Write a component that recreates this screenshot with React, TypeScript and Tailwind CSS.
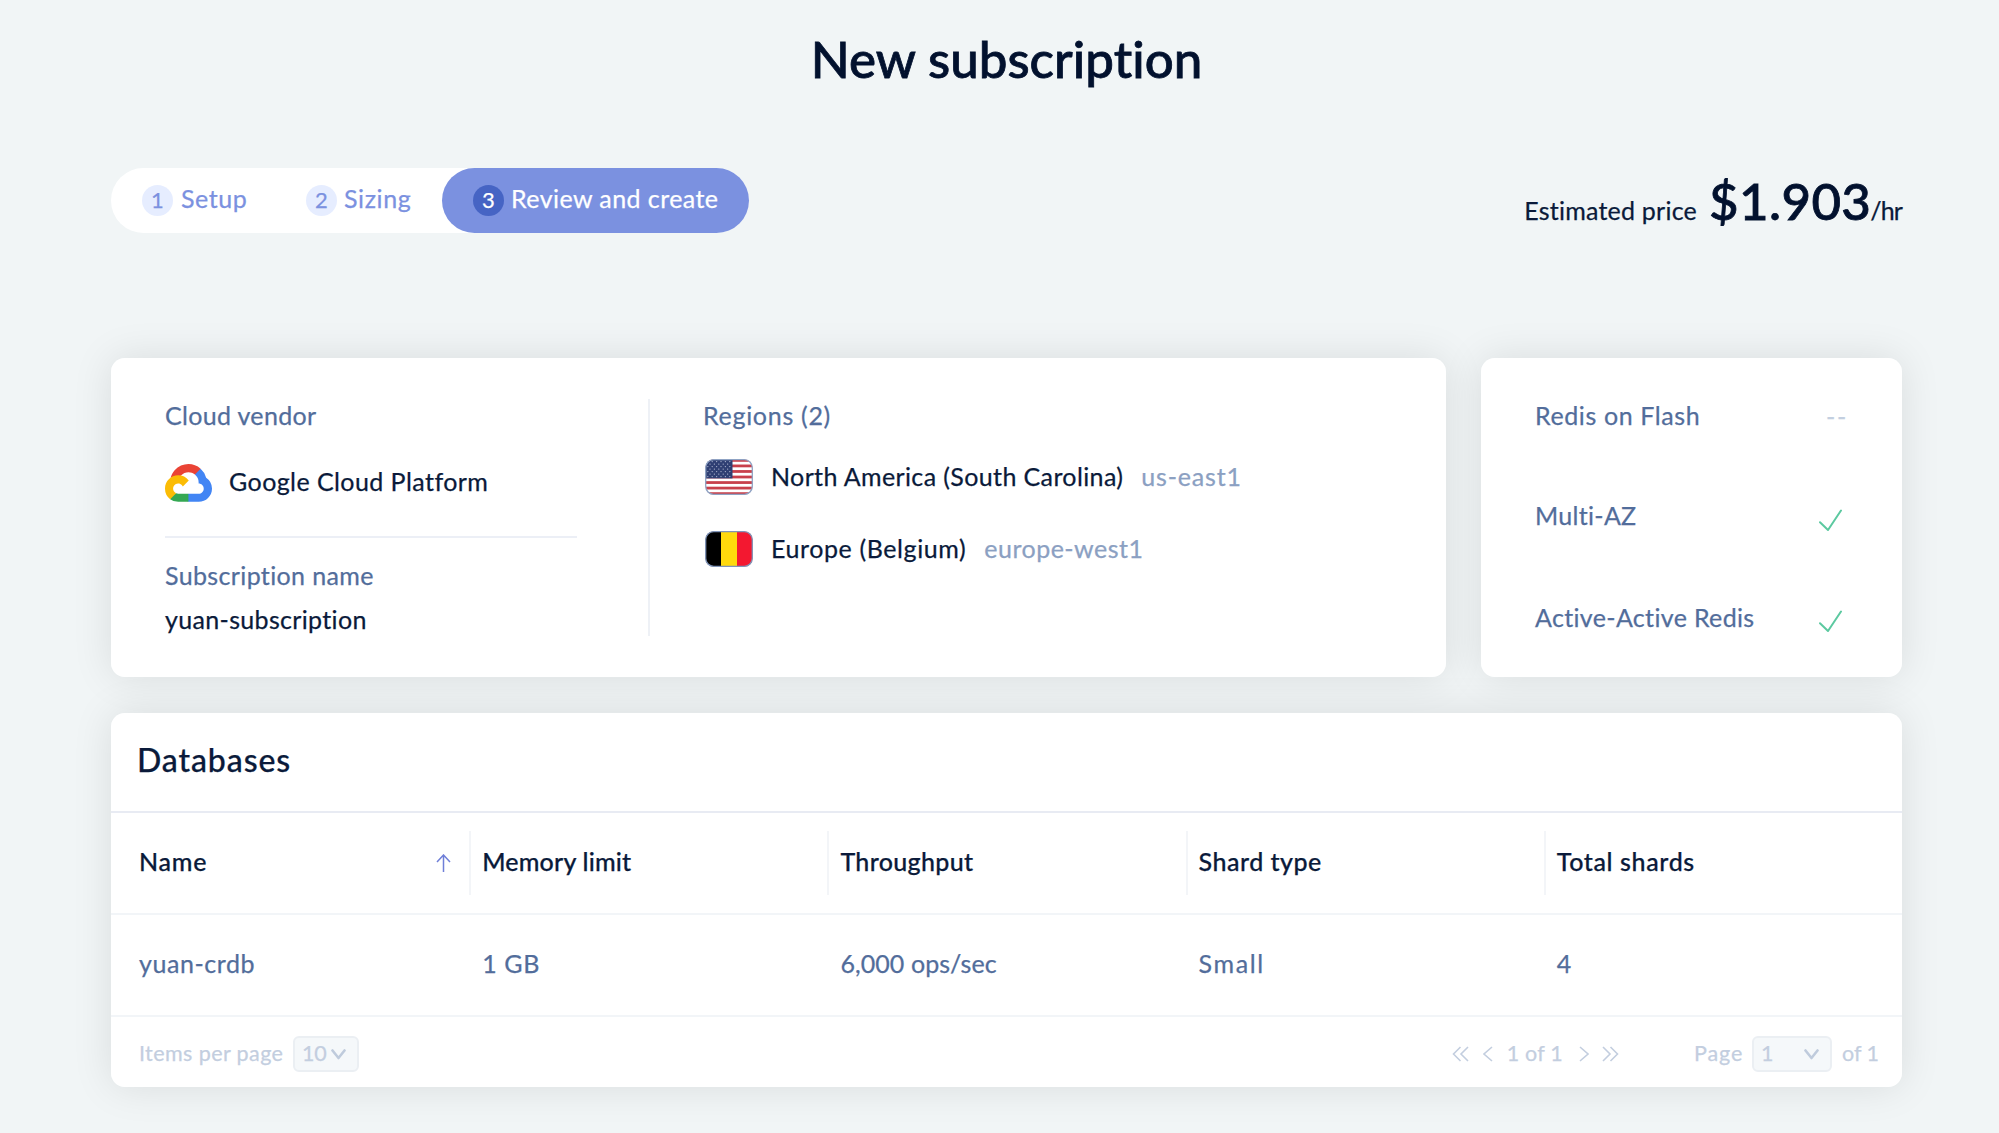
import React from "react";

const card =
  "relative rounded-[14px] bg-white before:absolute before:inset-0 before:-z-10 before:rounded-[14px] before:shadow-[0_0_40px_rgba(0,0,0,0.1)] before:content-['']";

function GoogleCloudLogo() {
  return (
    <svg className="h-[38px] w-[47px] shrink-0" viewBox="0 0 256 206">
      <path fill="#EA4335" d="M170.252 56.819l22.253-22.253 1.483-9.37C153.437-11.677 88.976-7.496 52.42 33.92 42.267 45.423 34.734 59.764 30.717 74.573l7.97-1.123 44.505-7.34 3.436-3.513c19.797-21.742 53.27-24.667 76.128-6.168l7.496.39z" />
      <path fill="#4285F4" d="M224.205 73.918a100.249 100.249 0 0 0-30.217-48.722l-31.232 31.232a55.515 55.515 0 0 1 20.379 44.037v5.544c15.351 0 27.797 12.445 27.797 27.796 0 15.352-12.446 27.485-27.797 27.485h-55.671l-5.466 5.934v33.34l5.466 5.231h55.67c39.93.311 72.553-31.494 72.864-71.424a72.303 72.303 0 0 0-31.793-60.453z" />
      <path fill="#34A853" d="M71.87 205.796h55.593V161.29H71.87a27.275 27.275 0 0 1-11.477-2.498l-7.887 2.42-22.409 22.253-1.952 7.574a71.922 71.922 0 0 0 43.724 14.757z" />
      <path fill="#FBBC05" d="M71.87 61.426C31.94 61.664-.237 94.227.001 134.156a72.301 72.301 0 0 0 28.143 56.882l32.248-32.248c-13.99-6.322-20.208-22.786-13.887-36.776 6.32-13.99 22.786-20.208 36.775-13.888a27.796 27.796 0 0 1 13.887 13.888l32.248-32.248A72.224 72.224 0 0 0 71.87 61.426z" />
    </svg>
  );
}

function UsFlag() {
  const stars: [number, number][] = [];
  for (let r = 0; r < 7; r++)
    for (let c = 0; c < (r % 2 ? 5 : 6); c++) stars.push([2.8 + c * 4.4 + (r % 2 ? 2.2 : 0), 2.6 + r * 2.5]);
  return (
    <svg className="h-9 w-12 shrink-0" viewBox="0 0 48 36">
      <clipPath id="us"><rect x="0.5" y="0.5" width="47" height="35" rx="8" /></clipPath>
      <g clipPath="url(#us)">
        <rect width="48" height="36" fill="#fff" />
        {[0, 1, 2, 3, 4, 5, 6].map((i) => (
          <rect key={i} y={i * 5.54} width="48" height="2.77" fill="#c8404b" />
        ))}
        <rect width="27.5" height="19.4" fill="#2f3f73" />
        {stars.map(([x, y], i) => (
          <circle key={i} cx={x} cy={y} r="0.7" fill="#a9b1cc" />
        ))}
      </g>
      <rect x="0.7" y="0.7" width="46.6" height="34.6" rx="8" fill="none" stroke="#8fa3c4" strokeWidth="1.3" />
    </svg>
  );
}

function BelgiumFlag() {
  return (
    <svg className="h-9 w-12 shrink-0" viewBox="0 0 48 36">
      <clipPath id="be"><rect x="0.5" y="0.5" width="47" height="35" rx="8" /></clipPath>
      <g clipPath="url(#be)">
        <rect width="16" height="36" fill="#000" />
        <rect x="16" width="16" height="36" fill="#ffd90c" />
        <rect x="32" width="16" height="36" fill="#f31830" />
      </g>
      <rect x="0.7" y="0.7" width="46.6" height="34.6" rx="8" fill="none" stroke="#8094b8" strokeWidth="1.3" />
    </svg>
  );
}

function Check() {
  return (
    <svg className="mr-1 mt-[9px] h-[23px] w-[23px]" viewBox="0 0 23 23" fill="none" stroke="#5cc9a0" strokeWidth="2" strokeLinecap="round" strokeLinejoin="round">
      <path d="M1 13.2 9 21 22 1.5" />
    </svg>
  );
}

function Chevrons({ count, right }: { count: number; right?: boolean }) {
  return (
    <svg className={count === 2 ? "h-4 w-[17px]" : "h-4 w-[10px]"} viewBox={count === 2 ? "0 0 17 16" : "0 0 10 16"} fill="none" stroke="#c3cedf" strokeWidth="1.6">
      {count === 2 ? (
        <path d={right ? "M1 1 8 8 1 15M8.5 1 15.5 8 8.5 15" : "M16 1 9 8 16 15M8.5 1 1.5 8 8.5 15"} />
      ) : (
        <path d={right ? "M1 1 9 8 1 15" : "M9 1 1 8 9 15"} />
      )}
    </svg>
  );
}

function Caret() {
  return (
    <svg className="h-[11px] w-[15px]" viewBox="0 0 15 11" fill="none" stroke="#bfcbdc" strokeWidth="2.6" strokeLinecap="round" strokeLinejoin="round">
      <path d="M1.5 1.5 7.5 9 13.5 1.5" />
    </svg>
  );
}

const columns = [
  { title: "Name", titleCls: "tracking-[0.8px]", value: "yuan-crdb", valueCls: "tracking-[0.56px]" },
  { title: "Memory limit", titleCls: "tracking-[0.2px]", value: "1 GB", valueCls: "tracking-[0.6px]" },
  { title: "Throughput", titleCls: "tracking-[0.34px]", value: "6,000 ops/sec", valueCls: "tracking-[0.07px]" },
  { title: "Shard type", titleCls: "tracking-[0.5px]", value: "Small", valueCls: "tracking-[1.6px]" },
  { title: "Total shards", titleCls: "tracking-[0.62px]", value: "4", valueCls: "" },
];

export default function App() {
  return (
    <div className="isolate h-[1133px] w-[1999px] overflow-hidden whitespace-nowrap bg-[#f1f5f6] pl-[111px] pr-[97px] pt-7 font-['Lato',sans-serif] text-[25px] leading-[30px] text-[#0a1a3a] [-webkit-text-stroke:0.25px_currentColor]">
      <h1 className="h-[60px] pt-px text-center text-[51px] font-medium leading-[60px] tracking-[0.05px] text-[#02112e] [-webkit-text-stroke:0.8px_currentColor]">New subscription</h1>

      <div className="mt-20 flex h-[65px] items-start justify-between">
        <ol className="flex h-[65px] w-[638px] items-center rounded-full bg-white text-[#7b91e0]">
          <li className="flex w-[195px] items-center gap-2 pl-[31px]">
            <span className="flex size-[31px] items-center justify-center rounded-full bg-[#e6edff] pb-0.5 text-[22px]">1</span>
            <span className="pb-[5px] tracking-[0.55px]">Setup</span>
          </li>
          <li className="flex w-[136px] items-center gap-[7px]">
            <span className="flex size-[31px] items-center justify-center rounded-full bg-[#e6edff] pb-0.5 text-[22px]">2</span>
            <span className="pb-[5px] tracking-[0.6px]">Sizing</span>
          </li>
          <li className="flex h-full flex-1 items-center gap-[7px] rounded-full bg-[#7b91e0] pl-[31px] text-white">
            <span className="flex size-[31px] items-center justify-center rounded-full bg-[#4664c4] pb-0.5 text-[22px]">3</span>
            <span className="pb-[5px] tracking-[0.43px]">Review and create</span>
          </li>
        </ol>
        <div className="mt-[3px] flex items-baseline leading-[60px]">
          <span className="tracking-[0.22px]">Estimated price</span>
          <span className="ml-3 text-[51px] font-medium tracking-[0.4px] text-[#02112e] [-webkit-text-stroke:0.8px_currentColor]">$1.903</span>
          <span className="-ml-px tracking-[-0.9px]">/hr</span>
        </div>
      </div>

      <div className="mt-[125px] flex h-[319px] gap-[35px]">
        <section className={`${card} flex w-[1335px] pl-[54px]`}>
          <div className="w-[412px] pt-[42px]">
            <h2 className="tracking-[0.33px] text-[#526d9b]">Cloud vendor</h2>
            <div className="mt-[34px] flex items-center gap-[17px]">
              <GoogleCloudLogo />
              <span className="pb-1 tracking-[0.43px]">Google Cloud Platform</span>
            </div>
            <div className="mt-[34px] h-0.5 bg-[#eceff6]" />
            <h2 className="mt-[22px] tracking-[0.36px] text-[#526d9b]">Subscription name</h2>
            <p className="mt-[14px] tracking-[0.33px]">yuan-subscription</p>
          </div>
          <div className="ml-[71px] mt-[41px] h-[237px] w-0.5 bg-[#eef1f6]" />
          <div className="ml-[53px] pt-[42px]">
            <h2 className="tracking-[0.7px] text-[#526d9b]">Regions (2)</h2>
            <div className="mt-[29px] flex items-center">
              <span className="ml-0.5"><UsFlag /></span>
              <span className="ml-[18px] pb-0.5 tracking-[0.38px]">North America (South Carolina)</span>
              <span className="ml-[18px] pb-0.5 tracking-[0.8px] text-[#8ba0c2]">us-east1</span>
            </div>
            <div className="mt-9 flex items-center">
              <span className="ml-0.5"><BelgiumFlag /></span>
              <span className="ml-[18px] pb-[3px] tracking-[0.6px]">Europe (Belgium)</span>
              <span className="ml-[18px] pb-[3px] tracking-[0.48px] text-[#8ba0c2]">europe-west1</span>
            </div>
          </div>
        </section>

        <section className={`${card} flex-1 pl-[54px] pr-[56px] pt-[42px] text-[#526d9b]`}>
          <div className="flex h-[100px] items-start justify-between">
            <span className="tracking-[0.6px]">Redis on Flash</span>
            <span className="-mr-0.5 pt-px tracking-[1.7px] text-[#c3cfe0]">--</span>
          </div>
          <div className="flex h-[101px] items-start justify-between">
            <span className="tracking-[0.3px]">Multi-AZ</span>
            <Check />
          </div>
          <div className="flex items-start justify-between">
            <span className="pt-px tracking-[0.34px]">Active-Active Redis</span>
            <Check />
          </div>
        </section>
      </div>

      <section className={`${card} mt-9 h-[374px]`}>
        <h2 className="h-[98px] pl-[26px] pt-7 text-[32px] font-medium leading-[38px] tracking-[0.9px]">Databases</h2>
        <div className="grid h-[104px] grid-cols-5 border-b-2 border-t-2 border-[#f2f5f8] border-t-[#e8ebf3]">
          {columns.map((c, i) => (
            <div key={c.title} className={i === 0 ? "mt-[18px] flex h-16 items-center justify-between pl-[28px] pr-[18px]" : "mt-[18px] flex h-16 items-center border-l-2 border-[#f3f5f8] pl-[11px]"}>
              <span className={`pb-1 font-medium ${c.titleCls}`}>{c.title}</span>
              {i === 0 && (
                <svg className="h-[18px] w-[15px]" viewBox="0 0 15 18" fill="none" stroke="#6f7fd8" strokeWidth="1.5">
                  <path d="M7.5 18V1M1 8 7.5 1 14 8" />
                </svg>
              )}
            </div>
          ))}
        </div>
        <div className="grid h-[102px] grid-cols-5 items-center border-b-2 border-[#f2f5f8] text-[#526d9b]">
          {columns.map((c, i) => (
            <span key={c.title} className={`pb-[5px] ${i === 0 ? "pl-[28px]" : "pl-[13px]"} ${c.valueCls}`}>{c.value}</span>
          ))}
        </div>
        <div className="flex h-[70px] items-center justify-between pl-[28px] pr-[23px] text-[21.5px] text-[#c3cedf]">
          <div className="flex items-center pt-1">
            <span className="w-[154px] pb-[3px] tracking-[0.41px]">Items per page</span>
            <span className="flex h-9 w-[66px] items-center gap-[5px] rounded-md border-2 border-[#ebeff3] bg-[#f5f8fa] pl-[7px]">
              <span className="pb-[3px] tracking-[-0.3px]">10</span>
              <Caret />
            </span>
          </div>
          <div className="flex items-center pt-1">
            <Chevrons count={2} />
            <span className="ml-[14px]"><Chevrons count={1} /></span>
            <span className="ml-[14px] pb-[3px] tracking-[0.2px]">1 of 1</span>
            <span className="ml-4"><Chevrons count={1} right /></span>
            <span className="ml-[13px]"><Chevrons count={2} right /></span>
            <span className="ml-[75px] w-[58px] pb-[3px] tracking-[0.9px]">Page</span>
            <span className="flex h-9 w-20 items-center justify-between rounded-md border-2 border-[#ebeff3] bg-[#f5f8fa] pl-[7px] pr-[11px]">
              <span className="pb-[3px]">1</span>
              <Caret />
            </span>
            <span className="ml-[10px] pb-[3px]">of 1</span>
          </div>
        </div>
      </section>
    </div>
  );
}
